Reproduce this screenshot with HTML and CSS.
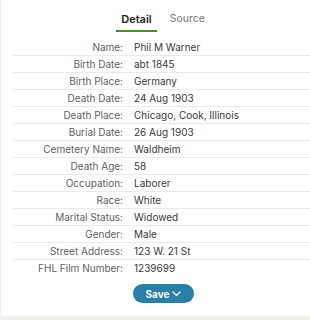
FILE: index.html
```html
<!DOCTYPE html>
<html>
<head>
<meta charset="utf-8">
<link rel="stylesheet" href="styles.css">
</head>
<body>
<div class="page">
  <div class="tabs">
    <div class="tab active">Detail</div>
    <div class="tab">Source</div>
  </div>
  <div class="table">
    <div class="row"><div class="label">Name:</div><div class="value">Phil M Warner</div></div>
    <div class="row"><div class="label">Birth Date:</div><div class="value">abt 1845</div></div>
    <div class="row"><div class="label">Birth Place:</div><div class="value">Germany</div></div>
    <div class="row"><div class="label">Death Date:</div><div class="value">24 Aug 1903</div></div>
    <div class="row"><div class="label">Death Place:</div><div class="value">Chicago, Cook, Illinois</div></div>
    <div class="row"><div class="label">Burial Date:</div><div class="value">26 Aug 1903</div></div>
    <div class="row"><div class="label">Cemetery Name:</div><div class="value">Waldheim</div></div>
    <div class="row"><div class="label">Death Age:</div><div class="value">58</div></div>
    <div class="row"><div class="label">Occupation:</div><div class="value">Laborer</div></div>
    <div class="row"><div class="label">Race:</div><div class="value">White</div></div>
    <div class="row"><div class="label">Marital Status:</div><div class="value">Widowed</div></div>
    <div class="row"><div class="label">Gender:</div><div class="value">Male</div></div>
    <div class="row"><div class="label">Street Address:</div><div class="value">123 W. 21 St</div></div>
    <div class="row"><div class="label">FHL Film Number:</div><div class="value">1239699</div></div>
  </div>
  <div class="actions">
    <button class="save">Save<svg class="chev" width="9" height="6" viewBox="0 0 9 6"><path d="M1 1 L4.5 4.5 L8 1" fill="none" stroke="#fff" stroke-width="1.3" stroke-linecap="round" stroke-linejoin="round"/></svg></button>
  </div>
  <div class="footer"></div>
</div>
</body>
</html>
```

FILE: styles.css
```css
html, body {
  margin: 0;
  padding: 0;
  background: #ffffff;
}
body {
  font-family: Inter, "Liberation Sans", Arial, sans-serif;
}
.page {
  display: flex;
  flex-direction: column;
  min-height: 320px;
  border-left: 1px solid #f0f0f0;
  box-sizing: border-box;
}
.tabs {
  display: flex;
  justify-content: center;
  gap: 8px;
  padding-top: 12px;
  padding-left: 15px;
}
.tab {
  font-size: 10.5px;
  color: #777;
  padding: 0 5px 4px;
  border-bottom: 2px solid transparent;
}
.tab.active {
  color: #222;
  font-weight: 600;
  font-size: 11px;
  border-bottom-color: #3c9a1e;
}
.table {
  margin-top: 7px;
  margin-left: 12px;
}
.row {
  display: flex;
  align-items: center;
  height: 16px;
  border-top: 1px solid #ebebeb;
  font-size: 10px;
}
.row:first-child {
  border-top: none;
}
.label {
  width: 110px;
  text-align: right;
  color: #5f5f5f;
}
.value {
  padding-left: 11px;
  color: #3a3a3a;
}
.actions {
  margin-top: 8px;
  padding-left: 132px;
}
.save {
  display: flex;
  align-items: center;
  justify-content: center;
  gap: 3px;
  width: 61px;
  height: 19px;
  border: none;
  border-radius: 10px;
  background: #2b7ea4;
  color: #fff;
  font-family: Inter, "Liberation Sans", Arial, sans-serif;
  font-weight: 700;
  font-size: 10px;
  padding: 0;
}
.chev {
  display: block;
}
.footer {
  margin-top: auto;
  height: 4px;
  background: #f4f1ec;
}
```
